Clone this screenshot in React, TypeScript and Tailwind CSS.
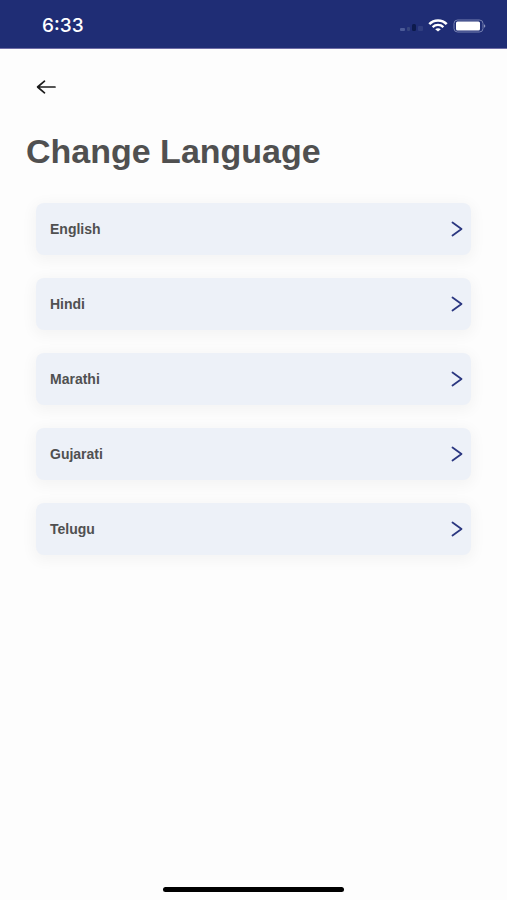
import React from 'react';

interface Language {
    code: string;
    label: string;
}

const LANGUAGES: Language[] = [
    { code: 'en', label: 'English' },
    { code: 'hi', label: 'Hindi' },
    { code: 'mr', label: 'Marathi' },
    { code: 'gu', label: 'Gujarati' },
    { code: 'te', label: 'Telugu' },
];

const StatusBar: React.FC = () => (
    <div className="h-[49px] bg-[#1f2d75] border-b border-[#6f6da6] pl-[42px] pr-[21px] pt-1 flex items-center justify-between text-white">
        <span className="font-['Inter',sans-serif] text-[19px] leading-6 font-medium">6:33</span>
        <div className="flex items-center gap-1">
            {/* Signal */}
            <svg className="w-6 h-4" viewBox="0 0 24 16" aria-hidden="true">
                <rect x="0" y="10" width="5" height="3" rx="1" fill="#4c5b98" />
                <rect x="7" y="9" width="3" height="4" rx="1" fill="#36457f" />
                <rect x="12" y="6" width="4" height="7" rx="1.5" fill="#0d1a4c" />
                <rect x="18" y="8" width="5" height="5" rx="1" fill="#303e80" />
            </svg>
            {/* Wifi */}
            <svg className="w-5 h-4" viewBox="0 0 20 16" fill="none" stroke="#fff" aria-hidden="true">
                <path d="M1.3 6.2C6 1.2 14 1.2 18.7 6.2" strokeWidth="2.5" />
                <path d="M4.6 9.1C7.6 6.2 12.4 6.2 15.4 9.1" strokeWidth="2.3" />
                <path d="M7.2 11.2C8.8 9.8 11.2 9.8 12.8 11.2L10 13.6Z" fill="#fff" stroke="none" />
            </svg>
            {/* Battery */}
            <svg className="w-[34px] h-4" viewBox="0 0 34 16" aria-hidden="true">
                <rect x="2" y="2" width="29" height="12" rx="3.5" fill="none" stroke="#7681b2" />
                <rect x="4" y="3.5" width="24" height="9" rx="1.5" fill="#fff" />
                <path d="M32 6.2C33.8 6.8 33.8 9.2 32 9.8Z" fill="#8b94be" />
            </svg>
        </div>
    </div>
);

const App: React.FC = () => {
    return (
        <div className="min-h-screen flex flex-col bg-[#fdfdfd] font-['Liberation_Sans',Arial,sans-serif] text-[#505050]">
            <StatusBar />

            <main className="flex-1 pt-6">
                <button type="button" aria-label="Go back" className="block ml-8 p-1 text-[#1c1c1c]">
                    <svg className="w-5 h-5" viewBox="0 0 20 20" fill="none" stroke="currentColor" strokeWidth="1.7" strokeLinecap="round" strokeLinejoin="round" aria-hidden="true">
                        <path d="M19 10H2M8.5 4.2L1.6 10l6.9 5.8" />
                    </svg>
                </button>

                <h1 className="mt-[30px] ml-[26px] text-[34px] leading-10 font-bold">Change Language</h1>

                <ul className="mt-8 px-9 flex flex-col gap-[23px]">
                    {LANGUAGES.map((language) => (
                        <li key={language.code}>
                            <button
                                type="button"
                                className="w-full h-[52px] pl-[14px] pr-2 flex items-center justify-between rounded-lg bg-[#edf1f8] shadow-[0_3px_14px_3px_rgba(0,0,0,0.04)] text-left text-sm font-bold"
                            >
                                {language.label}
                                <svg className="w-3 h-4" viewBox="0 0 12 16" fill="none" stroke="#2b3780" strokeWidth="1.8" strokeLinecap="round" strokeLinejoin="round" aria-hidden="true">
                                    <path d="M1.5 1.5L10.5 8l-9 6.5" />
                                </svg>
                            </button>
                        </li>
                    ))}
                </ul>
            </main>

            {/* Home indicator */}
            <div className="mx-auto mb-2 w-[181px] h-[5px] rounded-full bg-black" />
        </div>
    );
};

export default App;
